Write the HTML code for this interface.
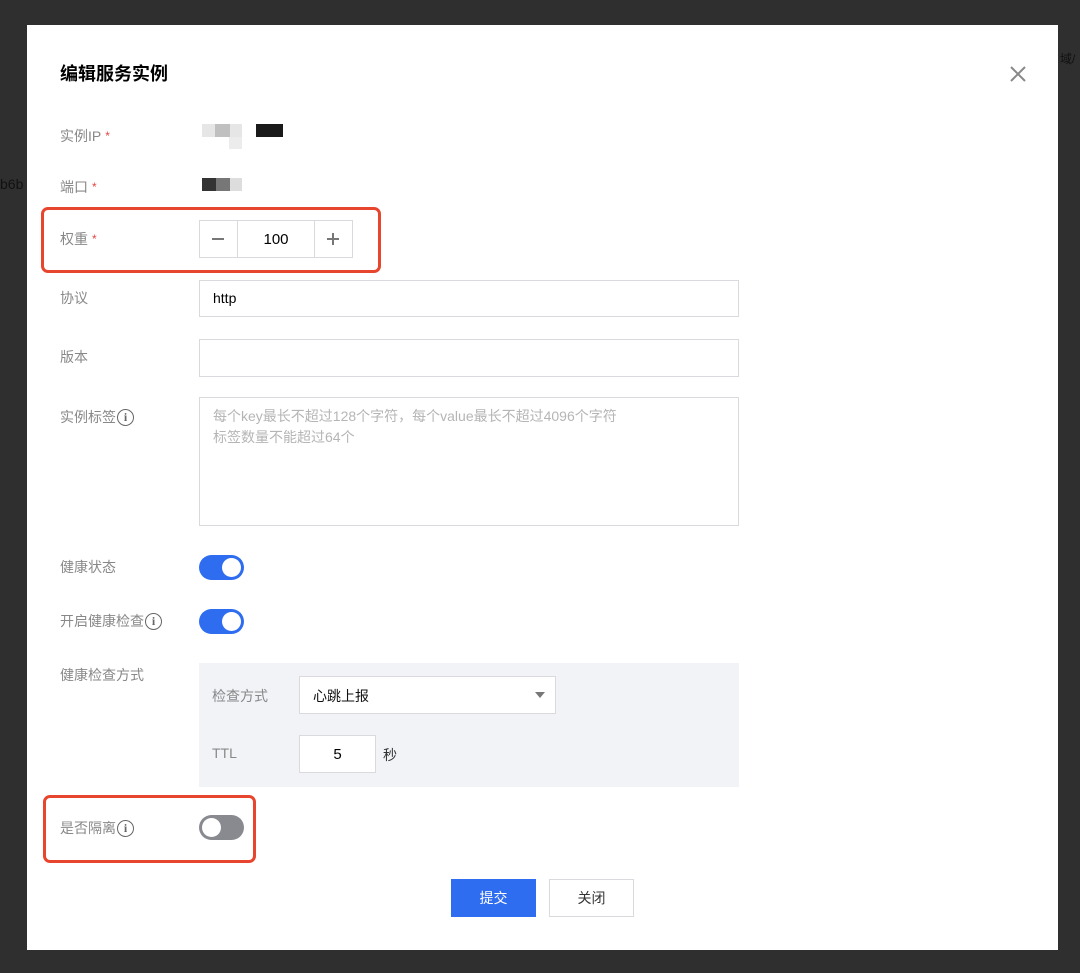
<!DOCTYPE html>
<html><head><meta charset="utf-8"><style>
*{margin:0;padding:0;box-sizing:border-box}
body{width:1080px;height:973px;background:#2f2f2f;position:relative;overflow:hidden;font-family:"Liberation Sans","Noto Sans CJK SC",sans-serif;font-size:14px;color:#000}
.a{position:absolute}
.modal{left:27px;top:25px;width:1031px;height:925px;background:#fff}
.lbl{position:absolute;left:60px;color:#888;font-size:14px;line-height:20px;display:flex;align-items:center}
.star{color:#e54545;font-size:12px;margin-left:4px}
.box{position:absolute;border:1px solid #d9d9de;background:#fff}
.tog{position:absolute;width:45px;height:25px;border-radius:13px;background:#2f6df0}
.tog::after{content:"";position:absolute;right:3px;top:3px;width:19px;height:19px;border-radius:50%;background:#fff}
.tog.off{background:#888a90}
.tog.off::after{left:3px;right:auto}
.info{display:inline-block;width:17px;height:17px;border:1.6px solid #666;border-radius:50%;color:#666;font-size:12px;line-height:14px;text-align:center;font-weight:bold;margin-left:1px;font-family:"Liberation Serif",serif}
.red{position:absolute;border:3px solid #e8452f;border-radius:7px}
.blk{position:absolute}
</style></head><body>
<div class="a" style="left:0;top:176px;color:#111;font-size:14px">b6b</div>
<div class="a" style="left:1060px;top:50px;color:#111;font-size:12px">域/</div>
<div class="a modal"></div>
<div class="a" style="left:60px;top:60px;font-size:18px;font-weight:bold;color:#000">编辑服务实例</div>
<svg class="a" style="left:1010px;top:66px" width="16" height="16" viewBox="0 0 16 16"><path d="M1 1L15 15M15 1L1 15" stroke="#888" stroke-width="2"/></svg>

<div class="lbl" style="top:126px">实例IP<span class="star">*</span></div>
<div class="blk" style="left:202px;top:124px;width:40px;height:13px;background:#e6e6e6"></div>
<div class="blk" style="left:215px;top:124px;width:15px;height:13px;background:#c0c0c0"></div>
<div class="blk" style="left:229px;top:137px;width:13px;height:12px;background:#ececec"></div>
<div class="blk" style="left:256px;top:124px;width:27px;height:13px;background:#1a1a1a"></div>
<div class="lbl" style="top:177px">端口<span class="star">*</span></div>
<div class="blk" style="left:202px;top:178px;width:14px;height:13px;background:#333"></div>
<div class="blk" style="left:216px;top:178px;width:14px;height:13px;background:#777"></div>
<div class="blk" style="left:230px;top:178px;width:12px;height:13px;background:#ddd"></div>

<div class="lbl" style="top:229px">权重<span class="star">*</span></div>
<div class="box" style="left:199px;top:220px;width:154px;height:38px"></div>
<div class="a" style="left:237px;top:220px;width:1px;height:38px;background:#d9d9de"></div>
<div class="a" style="left:314px;top:220px;width:1px;height:38px;background:#d9d9de"></div>
<div class="a" style="left:212px;top:238px;width:12px;height:2px;background:#777"></div>
<div class="a" style="left:238px;top:231px;width:76px;text-align:center;font-size:15px">100</div>
<div class="a" style="left:327px;top:238px;width:12px;height:2px;background:#777"></div>
<div class="a" style="left:332px;top:233px;width:2px;height:12px;background:#777"></div>
<div class="red" style="left:41px;top:207px;width:340px;height:66px"></div>

<div class="lbl" style="top:288px">协议</div>
<div class="box" style="left:199px;top:280px;width:540px;height:37px"></div>
<div class="a" style="left:213px;top:290px;font-size:14px">http</div>
<div class="lbl" style="top:347px">版本</div>
<div class="box" style="left:199px;top:339px;width:540px;height:38px"></div>
<div class="lbl" style="top:407px">实例标签<span class="info">i</span></div>
<div class="box" style="left:199px;top:397px;width:540px;height:129px"></div>
<div class="a" style="left:213px;top:406px;color:#b5b5b5;font-size:14px;line-height:21px">每个key最长不超过128个字符，每个value最长不超过4096个字符<br>标签数量不能超过64个</div>

<div class="lbl" style="top:557px">健康状态</div>
<div class="tog" style="left:199px;top:555px"></div>
<div class="lbl" style="top:611px">开启健康检查<span class="info">i</span></div>
<div class="tog" style="left:199px;top:609px"></div>
<div class="lbl" style="top:665px">健康检查方式</div>
<div class="a" style="left:199px;top:663px;width:540px;height:124px;background:#f2f3f7"></div>
<div class="a" style="left:212px;top:686px;color:#888;font-size:14px">检查方式</div>
<div class="box" style="left:299px;top:676px;width:257px;height:38px"></div>
<div class="a" style="left:313px;top:686px;font-size:14px;color:#111">心跳上报</div>
<svg class="a" style="left:535px;top:692px" width="10" height="6"><path d="M0 0H10L5 6Z" fill="#777"/></svg>
<div class="a" style="left:212px;top:745px;color:#888;font-size:14px">TTL</div>
<div class="box" style="left:299px;top:735px;width:77px;height:38px"></div>
<div class="a" style="left:299px;top:746px;width:77px;text-align:center;font-size:15px">5</div>
<div class="a" style="left:383px;top:745px;font-size:14px;color:#333">秒</div>

<div class="lbl" style="top:818px">是否隔离<span class="info">i</span></div>
<div class="tog off" style="left:199px;top:815px"></div>
<div class="red" style="left:43px;top:795px;width:213px;height:68px"></div>

<div class="a" style="left:451px;top:879px;width:85px;height:38px;background:#2f6df0;color:#fff;text-align:center;line-height:38px;font-size:14px">提交</div>
<div class="box" style="left:549px;top:879px;width:85px;height:38px;text-align:center;line-height:36px;font-size:14px;color:#333">关闭</div>
</body></html>
